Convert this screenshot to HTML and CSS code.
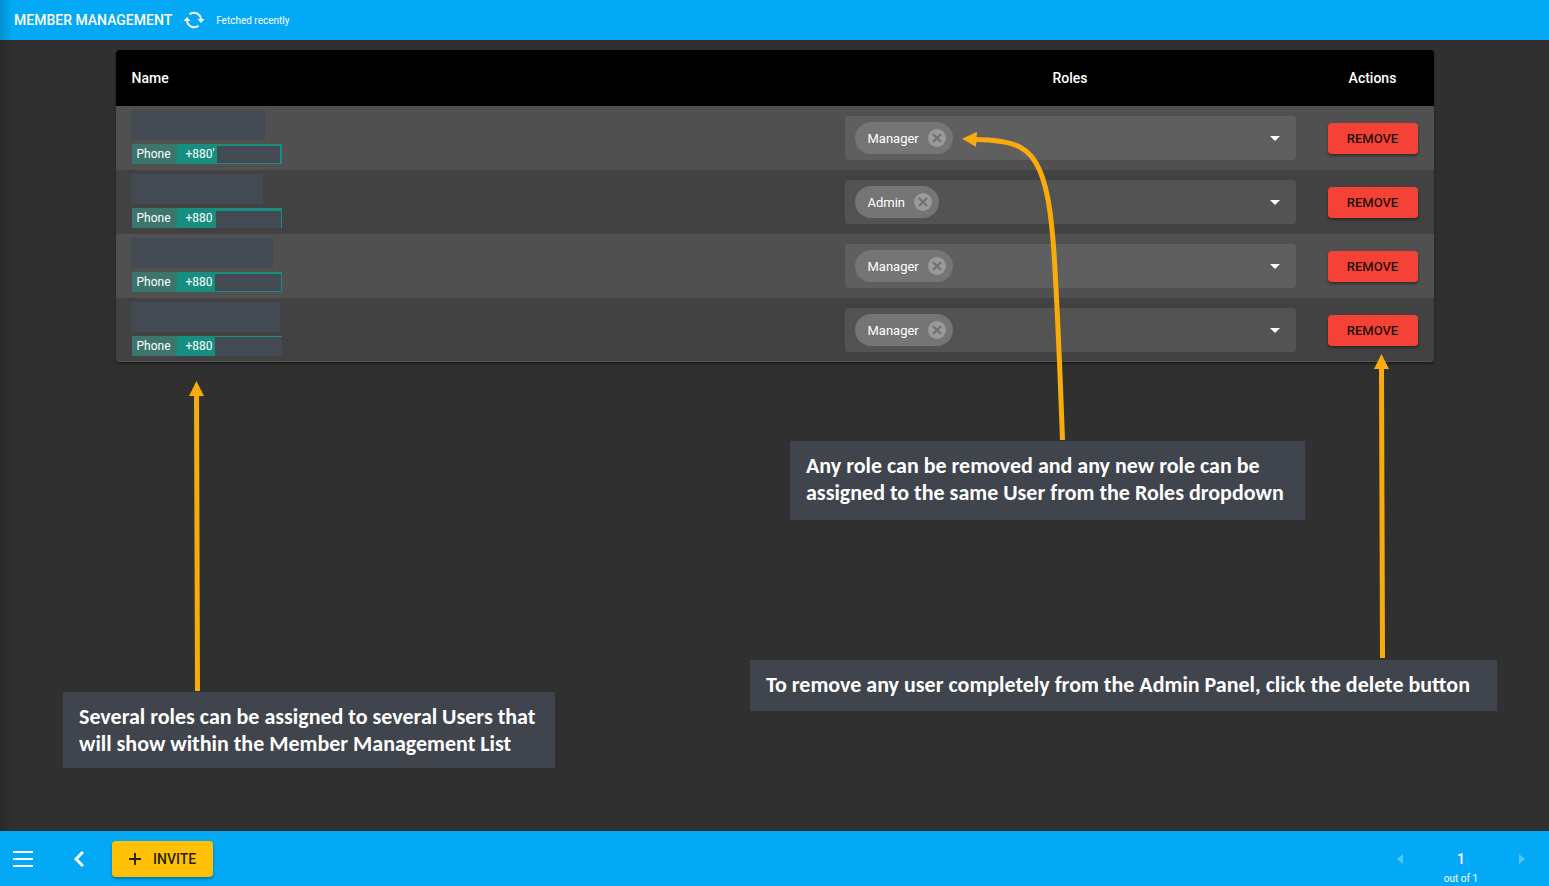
FILE: index.html
```html
<!DOCTYPE html>
<html lang="en">
<head>
<meta charset="utf-8">
<title>Member Management</title>
<link rel="stylesheet" href="styles.css">
</head>
<body>
<svg class="defs" aria-hidden="true">
  <symbol id="close" viewBox="0 0 18 18"><circle cx="9" cy="9" r="9" fill="#9a9a9a"/><path d="M5 5l8 8M13 5l-8 8" stroke="#6f6f6f" stroke-width="2"/></symbol>
  <symbol id="caret" viewBox="0 0 10 5"><path d="M0 0h10L5 5z" fill="#fff"/></symbol>
</svg>
<header class="topbar">
  <h1 class="title">MEMBER MANAGEMENT</h1>
  <button class="icon-button" aria-label="Refresh">
    <svg width="22" height="18" viewBox="0 0 22 18" fill="none" stroke="#fff" stroke-width="2">
      <path d="M6.500 3.200A7.200 7.200 0 0 1 18 8.500M15.500 14.800A7.200 7.200 0 0 1 4 9.500"/>
      <path d="M14.500 8h7l-3.500 4zM.5 10h7L4 6z" fill="#fff" stroke="none"/>
    </svg>
  </button>
  <span class="status">Fetched recently</span>
</header>

<main class="content">
  <div class="card">
    <table class="members">
      <thead>
        <tr><th class="name-col">Name</th><th class="roles-col">Roles</th><th class="actions-col">Actions</th></tr>
      </thead>
      <tbody>
        <tr>
          <td class="name-cell"><div class="name-mask mask-a"></div><div class="phone"><span class="phone-label">Phone</span><span class="phone-value value-a">+880'</span><span class="number-mask number-a"></span></div></td>
          <td><div class="roles"><span class="chip">Manager<button class="chip-close" aria-label="Remove Manager"><svg width="18" height="18"><use href="#close"/></svg></button></span><select class="role-select" aria-label="Roles of member 1"><option></option><option>Admin</option></select><svg class="caret" width="10" height="5"><use href="#caret"/></svg></div></td>
          <td><button class="remove">REMOVE</button></td>
        </tr>
        <tr>
          <td class="name-cell"><div class="name-mask mask-b"></div><div class="phone"><span class="phone-label">Phone</span><span class="phone-value value-b">+880</span><span class="number-mask number-b"></span></div></td>
          <td><div class="roles"><span class="chip">Admin<button class="chip-close" aria-label="Remove Admin"><svg width="18" height="18"><use href="#close"/></svg></button></span><select class="role-select" aria-label="Roles of member 2"><option></option><option>Manager</option></select><svg class="caret" width="10" height="5"><use href="#caret"/></svg></div></td>
          <td><button class="remove">REMOVE</button></td>
        </tr>
        <tr>
          <td class="name-cell"><div class="name-mask mask-c"></div><div class="phone"><span class="phone-label">Phone</span><span class="phone-value">+880</span><span class="number-mask number-c"></span></div></td>
          <td><div class="roles"><span class="chip">Manager<button class="chip-close" aria-label="Remove Manager"><svg width="18" height="18"><use href="#close"/></svg></button></span><select class="role-select" aria-label="Roles of member 3"><option></option><option>Admin</option></select><svg class="caret" width="10" height="5"><use href="#caret"/></svg></div></td>
          <td><button class="remove">REMOVE</button></td>
        </tr>
        <tr>
          <td class="name-cell"><div class="name-mask mask-d"></div><div class="phone"><span class="phone-label">Phone</span><span class="phone-value">+880</span><span class="number-mask number-d"></span></div></td>
          <td><div class="roles"><span class="chip">Manager<button class="chip-close" aria-label="Remove Manager"><svg width="18" height="18"><use href="#close"/></svg></button></span><select class="role-select" aria-label="Roles of member 4"><option></option><option>Admin</option></select><svg class="caret" width="10" height="5"><use href="#caret"/></svg></div></td>
          <td><button class="remove">REMOVE</button></td>
        </tr>
      </tbody>
    </table>
  </div>
</main>

<footer class="bottombar">
  <button class="icon-button menu" aria-label="Menu"><svg width="20" height="16" viewBox="0 0 20 16" stroke="#fff" stroke-width="2"><path d="M0 1h20M0 8h20M0 15h20"/></svg></button>
  <button class="icon-button back" aria-label="Back"><svg width="10" height="16" viewBox="0 0 10 16" fill="none" stroke="#fff" stroke-width="3"><path d="M9 1L2 8l7 7"/></svg></button>
  <button class="invite"><svg width="12" height="12" viewBox="0 0 12 12" stroke="#2d250b" stroke-width="2"><path d="M6 0v12M0 6h12"/></svg>INVITE</button>
  <nav class="pager" aria-label="Pages">
    <button class="icon-button" aria-label="Previous page"><svg width="6" height="10" viewBox="0 0 6 10"><path d="M6 0v10L0 5z" fill="#56c3f7"/></svg></button>
    <div class="page"><span class="page-number">1</span><span class="page-total">out of 1</span></div>
    <button class="icon-button" aria-label="Next page"><svg width="6" height="10" viewBox="0 0 6 10"><path d="M0 0v10l6-5z" fill="#56c3f7"/></svg></button>
  </nav>
</footer>

<div class="edge-shade"></div>
<svg class="arrows" width="1549" height="886" viewBox="0 0 1549 886" fill="none" stroke="#faab0c" stroke-width="5" aria-hidden="true">
  <path d="M197.500 691L196.500 394M1382.500 658L1381.500 367"/>
  <path d="M1062.500 440C1060 370 1057.500 310 1054 253C1051 210 1047 188 1040 171C1031 149 1018 140 975 139.500"/>
  <path d="M196.500 381l7.500 15h-15zM1381.500 354l7.500 15h-15zM962 138.700l15-7l-1 15z" fill="#faab0c" stroke="none"/>
</svg>
<p class="note note-users">Several roles can be assigned to several Users that<br>will show within the Member Management List</p>
<p class="note note-roles">Any role can be removed and any new role can be<br>assigned to the same User from the Roles dropdown</p>
<p class="note note-remove">To remove any user completely from the Admin Panel, click the delete button</p>
</body>
</html>
```
FILE: styles.css
```css
* { box-sizing: border-box; }

body {
  margin: 0;
  min-height: 100vh;
  display: flex;
  flex-direction: column;
  position: relative;
  background: #303030;
  color: #fff;
  font-family: Roboto, "Liberation Sans", sans-serif;
  font-size: 14px;
}

button { font: inherit; color: inherit; border: 0; padding: 0; cursor: pointer; }

svg { display: block; }

.defs { position: absolute; width: 0; height: 0; }

.icon-button { background: none; }

/* Top bar */
.topbar {
  display: flex;
  align-items: center;
  gap: 11px;
  height: 40px;
  padding: 0 14px;
  background: #03a9f4;
}

.title { margin: 0; font-size: 14px; font-weight: 500; }
.status { font-size: 10px; }

/* Members table */
.content { flex: 1; padding-top: 10px; }

.card {
  width: 1318px;
  max-width: 90%;
  margin: 0 auto;
  border-radius: 4px;
  overflow: hidden;
  box-shadow: 0 2px 3px rgba(0, 0, 0, 0.4);
}

.members { width: 100%; border-collapse: collapse; table-layout: fixed; }
.members th { height: 56px; padding: 0 16px; background: #000; font-weight: 500; }
.members .name-col { text-align: left; }
.roles-col { width: 483px; }
.actions-col { width: 122px; }
.members td { height: 64px; padding: 0 16px; }
.members tbody tr { background: #424242; }
.members tbody tr:nth-child(odd) { background: #505050; }
.members tbody tr:last-child { box-shadow: inset 0 -1px #555; }

.members .name-cell { padding: 4px 15px 6px; vertical-align: top; }
.name-mask { height: 30px; margin-bottom: 4px; background: #434a54; }
.mask-a { width: 134px; }
.mask-b { width: 132px; }
.mask-c { width: 142px; }
.mask-d { width: 149px; }

.phone {
  display: flex;
  width: 150px;
  height: 20px;
  margin-left: 1px;
  background: #178f80;
  font-size: 12px;
  line-height: 20px;
}
.phone-label { width: 45px; padding-left: 5px; background: #3d756d; }
.phone-value { width: 38px; padding-left: 9px; }
.value-a { width: 40px; }
.value-b { width: 39px; }
.number-mask { flex: 1; background: #434a54; }
.number-a { margin: 2px 2px 1px 0; }
.number-b { margin: 3px 1px 0 0; }
.number-c { margin: 2px 1px 1px 0; }
.number-d { margin-top: 1px; }

.roles {
  display: flex;
  align-items: center;
  position: relative;
  height: 44px;
  padding: 0 10px;
  border-radius: 4px;
  background: rgba(255, 255, 255, 0.09);
}
.chip {
  display: flex;
  align-items: center;
  gap: 9px;
  height: 32px;
  padding: 0 7px 0 13px;
  border-radius: 16px;
  background: #757575;
  font-size: 13px;
}
.chip-close { background: none; }
.role-select { flex: 1; height: 44px; border: 0; background: none; color: inherit; appearance: none; }
.caret { position: absolute; right: 16px; pointer-events: none; }

.remove {
  width: 100%;
  height: 31px;
  border-radius: 4px;
  background: #f44336;
  color: rgba(0, 0, 0, 0.87);
  font-size: 13px;
  font-weight: 500;
  box-shadow: 0 2px 3px rgba(0, 0, 0, 0.4);
}

/* Bottom bar */
.bottombar {
  display: flex;
  align-items: center;
  height: 55px;
  padding: 0 24px 0 13px;
  background: #03a9f4;
}
.back { margin: 0 28px 0 41px; }
.invite {
  display: flex;
  align-items: center;
  gap: 12px;
  height: 36px;
  padding: 0 17px;
  border-radius: 4px;
  background: #ffc107;
  color: rgba(0, 0, 0, 0.87);
  font-weight: 500;
  box-shadow: 0 2px 3px rgba(0, 0, 0, 0.3);
}
.pager { display: flex; align-items: center; gap: 41px; margin-left: auto; }
.page { display: flex; flex-direction: column; align-items: center; height: 18px; line-height: 18px; }
.page-number { font-weight: 500; }
.page-total { font-size: 10px; line-height: 22px; }

/* Annotations floating over the page */
.edge-shade {
  position: absolute;
  inset: 0 auto 55px 0;
  width: 12px;
  background: linear-gradient(90deg, rgba(0, 0, 0, 0.16), transparent);
  pointer-events: none;
}
.arrows { position: absolute; top: 0; left: 0; pointer-events: none; }
.note {
  position: absolute;
  margin: 0;
  padding: 11px 16px;
  background: #40444d;
  font-family: Carlito, Lato, sans-serif;
  font-size: 22px;
  font-weight: 700;
  line-height: 27px;
  white-space: nowrap;
}
.note-users { left: 63px; top: 692px; width: 492px; height: 76px; }
.note-roles { left: 790px; top: 441px; width: 515px; height: 79px; }
.note-remove { left: 750px; top: 660px; width: 747px; height: 51px; }
```
